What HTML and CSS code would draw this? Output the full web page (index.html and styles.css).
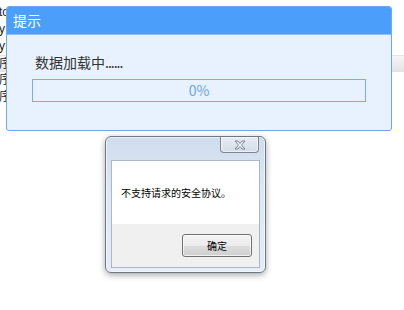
FILE: index.html
```html
<!DOCTYPE html>
<html lang="zh-CN">
<head>
<meta charset="utf-8">
<title>提示</title>
<link rel="stylesheet" href="styles.css">
</head>
<body>
<div class="page">
  <div class="row">to</div>
  <div class="row">y</div>
  <div class="row">y</div>
  <div class="row head">序</div>
  <div class="row">序</div>
  <div class="row">序</div>
</div>

<div class="tip">
  <div class="tip-title">提示</div>
  <div class="tip-body">
    <div class="tip-msg">数据加载中<span class="dots">......</span></div>
    <div class="progress">0%</div>
  </div>
</div>

<div class="msgbox">
  <div class="msgbox-bar">
    <div class="close">
      <svg width="14" height="10" viewBox="0 0 14 10">
        <path d="M2 1 L5 1 L7 3.5 L9 1 L12 1 L8.5 5 L12 9 L9 9 L7 6.5 L5 9 L2 9 L5.5 5 Z" fill="#f4f6f8" stroke="#6d7784" stroke-width="0.9" stroke-linejoin="round"/>
      </svg>
    </div>
  </div>
  <div class="client">
    <div class="client-text">不支持请求的安全协议。</div>
    <div class="client-foot">
      <div class="btn">确定</div>
    </div>
  </div>
</div>
</body>
</html>
```

FILE: styles.css
```css
* {
  box-sizing: border-box;
}
html, body {
  margin: 0;
  padding: 0;
  background: #ffffff;
}
body {
  width: 404px;
  height: 310px;
  overflow: hidden;
  position: relative;
  font-family: "Liberation Sans", "Noto Sans CJK SC", sans-serif;
}
.page {
  padding-top: 4px;
  display: flex;
  flex-direction: column;
}
.row {
  height: 17px;
  line-height: 17px;
  font-size: 12px;
  color: #222;
  margin-left: -1px;
}
.head {
  background: linear-gradient(#f6f6f6, #e3e3e3);
  border-top: 1px solid #e6e6e6;
  line-height: 16px;
}

.tip {
  position: absolute;
  left: 6px;
  top: 6px;
  width: 386px;
  height: 125px;
  border: 1px solid #6fa8ee;
  border-radius: 3px;
  background: #e8f2fe;
  display: flex;
  flex-direction: column;
  overflow: hidden;
}
.tip-title {
  height: 28px;
  background: #4b9ffb;
  border-bottom: 1px solid #8cc0fb;
  color: #ffffff;
  font-family: "Noto Sans CJK SC", sans-serif;
  font-size: 14px;
  line-height: 27px;
  padding-left: 6px;
}
.tip-body {
  flex: 1;
  padding: 0 25px;
  display: flex;
  flex-direction: column;
}
.tip-msg {
  margin-top: 17px;
  height: 20px;
  line-height: 20px;
  padding-left: 3px;
  font-family: "Noto Sans CJK SC", sans-serif;
  font-size: 14px;
  color: #333333;
}
.dots {
  letter-spacing: -1px;
}
.progress {
  margin-top: 7px;
  height: 23px;
  line-height: 21px;
  border: 1px solid #78adf0;
  text-align: center;
  font-family: "Noto Sans CJK SC", sans-serif;
  font-size: 14px;
  color: #6ea3ec;
}

.msgbox {
  position: absolute;
  left: 105px;
  top: 136px;
  width: 161px;
  height: 137px;
  border: 1px solid #6a7888;
  border-radius: 6px;
  background: linear-gradient(#cfdcec, #dde8f4 40%, #e4ecf6);
  box-shadow: 0 2px 6px rgba(0, 0, 0, 0.35), inset 0 0 0 1px rgba(255, 255, 255, 0.6);
  display: flex;
  flex-direction: column;
  padding: 0 5px 4px 5px;
}
.msgbox-bar {
  height: 23px;
  display: flex;
  justify-content: flex-end;
  align-items: flex-start;
}
.close {
  width: 39px;
  height: 16px;
  margin-right: 1px;
  border: 1px solid #7c8795;
  border-top: none;
  border-radius: 0 0 4px 4px;
  background: linear-gradient(#e6edf5, #d4dde8);
  box-shadow: inset 0 0 0 1px rgba(255, 255, 255, 0.55);
  display: flex;
  align-items: center;
  justify-content: center;
}
.client {
  flex: 1;
  border: 1px solid #a9b7c8;
  display: flex;
  flex-direction: column;
  background: #f0f0f0;
}
.client-text {
  height: 63px;
  background: #ffffff;
  display: flex;
  align-items: center;
  padding-left: 9px;
  font-family: "Noto Sans CJK SC", sans-serif;
  font-size: 10px;
  color: #000000;
}
.client-foot {
  flex: 1;
  display: flex;
  justify-content: flex-end;
  align-items: flex-start;
  padding: 10px 7px 0 0;
}
.btn {
  width: 70px;
  height: 23px;
  border: 1px solid #707070;
  border-radius: 3px;
  background: linear-gradient(#f4f4f4 0%, #ebebeb 50%, #dddddd 51%, #cfcfcf 100%);
  box-shadow: inset 0 0 0 1px rgba(255, 255, 255, 0.7);
  text-align: center;
  line-height: 21px;
  font-family: "Noto Sans CJK SC", sans-serif;
  font-size: 10px;
  color: #000;
}
```
